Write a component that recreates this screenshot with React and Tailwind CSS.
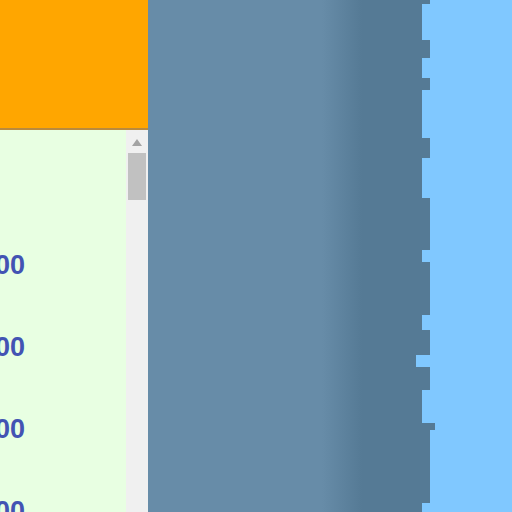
const EDGE = [
  'h-[4px] w-[68px]',
  'h-[36px] w-[60px]',
  'h-[18px] w-[68px]',
  'h-[20px] w-[60px]',
  'h-[12px] w-[68px]',
  'h-[48px] w-[60px]',
  'h-[20px] w-[68px]',
  'h-[40px] w-[60px]',
  'h-[52px] w-[68px]',
  'h-[12px] w-[60px]',
  'h-[53px] w-[68px]',
  'h-[15px] w-[60px]',
  'h-[25px] w-[68px]',
  'h-[12px] w-[54px]',
  'h-[23px] w-[68px]',
  'h-[33px] w-[60px]',
  'h-[7px] w-[73px]',
  'h-[73px] w-[68px]',
  'h-[9px] w-[60px]',
];

const ROWS = ['1,000', '2,000', '3,000', '4,000'];

export default function App() {
  return (
    <div className="flex h-[512px] w-[512px] overflow-hidden font-['Liberation_Sans',Arial,sans-serif]">
      {/* left panel */}
      <div className="flex w-[148px] shrink-0 flex-col">
        <div className="h-[128px] shrink-0 bg-[#ffa600]" />
        <div className="h-[2px] shrink-0 bg-[#b98a3e]" />
        <div className="flex flex-1 min-h-0">
          <div className="flex-1 bg-[#e8ffe2] pt-[94px]">
            {ROWS.map(r => (
              <div key={r} className="flex h-[82px] w-[25px] items-center justify-end overflow-hidden">
                <span className="whitespace-nowrap text-[27px] font-bold leading-none text-[#4353b3]">{r}</span>
              </div>
            ))}
          </div>
          <div className="flex w-[22px] shrink-0 flex-col items-center bg-[#f0f0f0] pt-[9px]">
            <svg width="10" height="7" viewBox="0 0 10 7">
              <path d="M5 0 L10 7 L0 7 Z" fill="#a3a3a3" />
            </svg>
            <div className="mt-[7px] h-[47px] w-[18px] bg-[#c1c1c1]" />
          </div>
        </div>
      </div>

      {/* middle band */}
      <div className="w-[174px] shrink-0 bg-[#678ca8]" />
      <div className="w-[40px] shrink-0 bg-gradient-to-r from-[#678ca8] to-[#557a95]" />

      {/* jagged edge onto light blue */}
      <div className="flex flex-1 flex-col bg-[#80c8ff]">
        {EDGE.map((c, i) => (
          <div key={i} className={`${c} shrink-0 bg-[#557a95]`} />
        ))}
      </div>
    </div>
  );
}
